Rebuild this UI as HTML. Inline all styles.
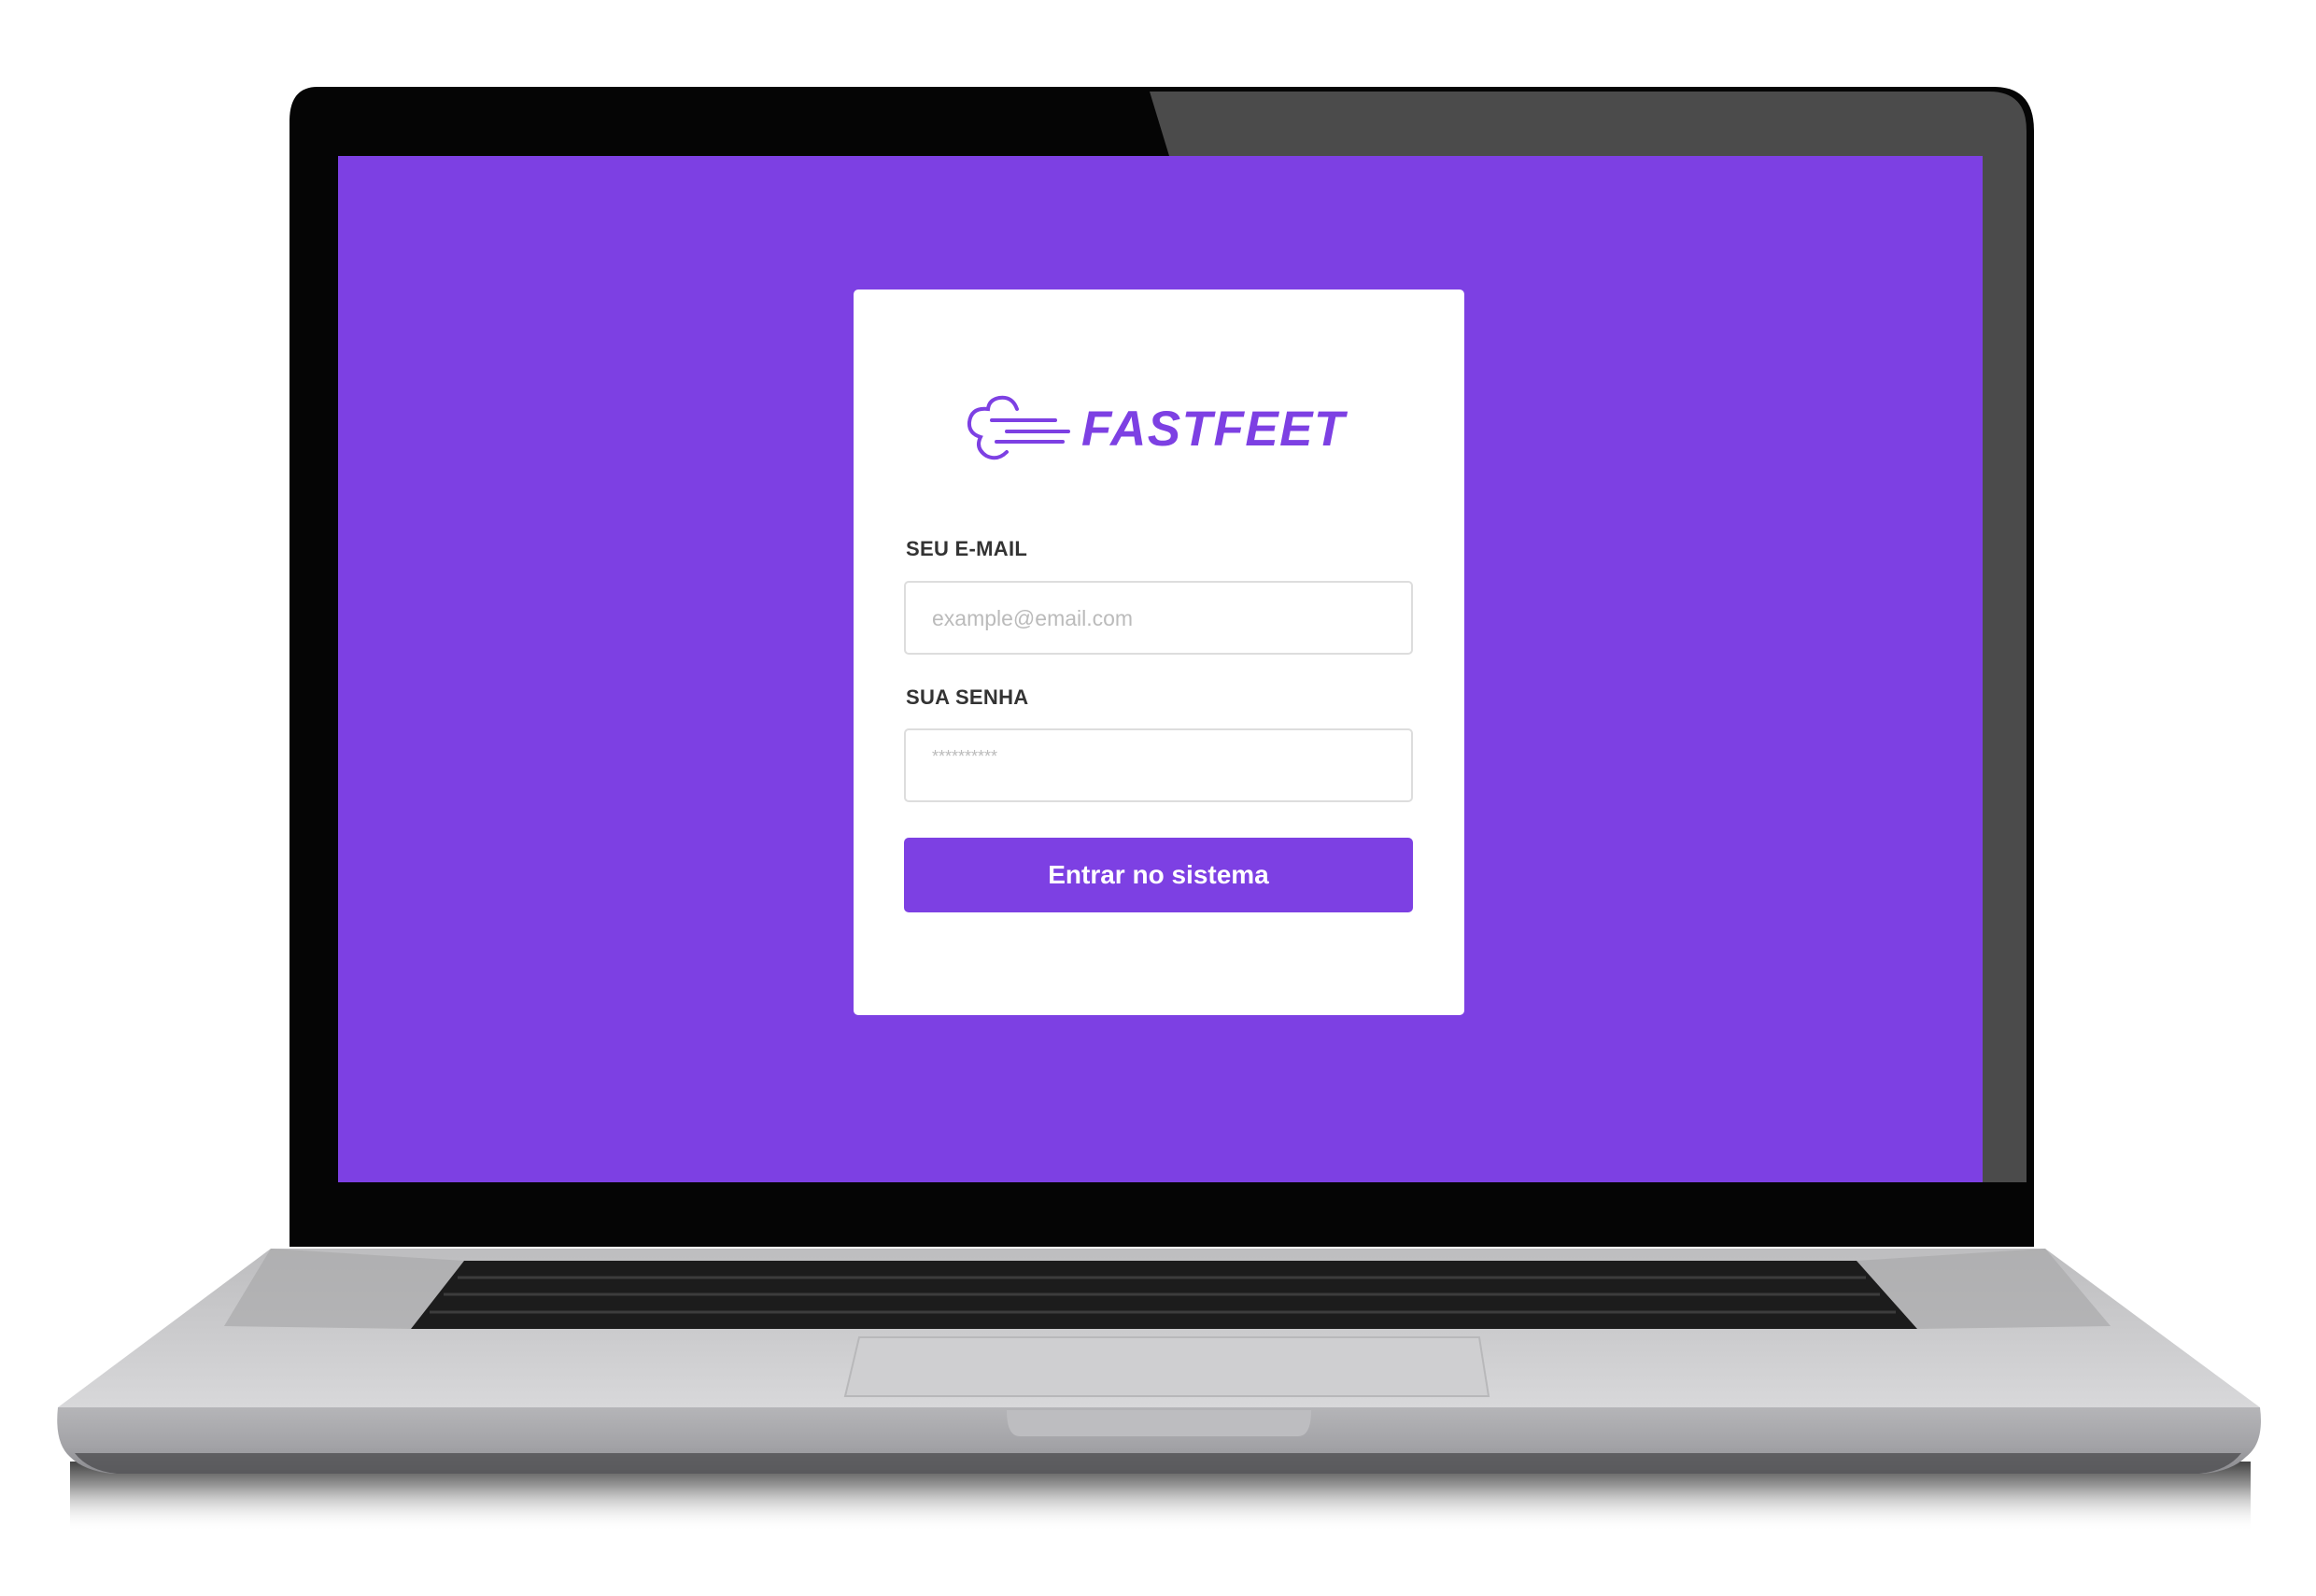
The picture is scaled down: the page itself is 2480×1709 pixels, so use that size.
<!DOCTYPE html>
<html><head><meta charset="utf-8"><style>
html,body{margin:0;padding:0;background:#fff;}
body{width:2480px;height:1709px;position:relative;overflow:hidden;font-family:"Liberation Sans",Arial,sans-serif;}
svg.l{position:absolute;left:0;top:0}
.card{position:absolute;left:914px;top:310px;width:654px;height:777px;background:#fff;border-radius:5px;}
.lbl{position:absolute;left:56px;font-weight:bold;font-size:22px;color:#333;letter-spacing:0.3px}
.inp{position:absolute;left:54px;width:545px;height:79px;border:2px solid #ddd;border-radius:5px;box-sizing:border-box;}
.ph{position:absolute;left:28px;font-size:23px;color:#bbb}
.btn{position:absolute;left:54px;top:587px;width:545px;height:80px;background:#7d40e3;border-radius:5px;color:#fff;font-weight:bold;font-size:28px;text-align:center;line-height:80px}
.logo{position:absolute;left:244px;top:119px;font-weight:bold;font-style:italic;font-size:53px;color:#7d40e3;letter-spacing:1.5px}
</style></head><body>
<svg class="l" width="2480" height="1709" viewBox="0 0 2480 1709">
<defs>
<linearGradient id="deck" x1="0" y1="0" x2="0" y2="1"><stop offset="0" stop-color="#bdbdbf"/><stop offset="1" stop-color="#d8d8da"/></linearGradient>
<linearGradient id="front" x1="0" y1="0" x2="0" y2="1"><stop offset="0" stop-color="#b5b5b8"/><stop offset="0.6" stop-color="#a2a2a6"/><stop offset="1" stop-color="#8a8a8e"/></linearGradient>
<linearGradient id="sh" x1="0" y1="0" x2="0" y2="1"><stop offset="0" stop-color="#444"/><stop offset="0.35" stop-color="#999"/><stop offset="1" stop-color="#fff" stop-opacity="0"/></linearGradient>
</defs>
<path d="M340 93 H2135 Q2178 93 2178 140 V1335 H310 V130 Q310 93 340 93 Z" fill="#050505"/>
<path d="M1231 98 H2130 Q2170 98 2170 140 V1266 H2123 V167 H1252 Z" fill="#4b4b4b"/>
<rect x="362" y="167" width="1761" height="1099" fill="#7d40e3"/>
<rect x="75" y="1565" width="2335" height="75" fill="url(#sh)"/>
<path d="M290 1337 H2190 L2420 1507 H62 Z" fill="url(#deck)"/>
<path d="M290 1337 L497 1350 L440 1423 L240 1420 Z" fill="#a9a9ab" opacity="0.7"/>
<path d="M2190 1337 L1988 1350 L2053 1423 L2260 1420 Z" fill="#a9a9ab" opacity="0.7"/>
<path d="M497 1350 H1988 L2053 1423 H440 Z" fill="#1c1c1c"/>
<g stroke="#3c3c3c" stroke-width="3">
<line x1="490" y1="1368" x2="1998" y2="1368"/><line x1="475" y1="1386" x2="2013" y2="1386"/><line x1="460" y1="1405" x2="2030" y2="1405"/>
</g>
<path d="M920 1432 H1584 L1594 1495 H905 Z" fill="#cfcfd1" stroke="#b8b8ba" stroke-width="2"/>
<path d="M62 1507 H2420 Q2425 1545 2405 1560 Q2390 1575 2360 1578 H120 Q90 1575 75 1560 Q58 1545 62 1507 Z" fill="url(#front)"/>
<path d="M80 1556 H2400 Q2385 1575 2355 1578 H125 Q95 1575 80 1556 Z" fill="#4a4a4c" opacity="0.75"/>
<path d="M1078 1510 H1404 Q1404 1538 1390 1538 H1092 Q1078 1538 1078 1510 Z" fill="#bdbdc0"/>
</svg>
<div class="card">
<svg style="position:absolute;left:118px;top:112px" width="120" height="75" viewBox="0 0 120 75" fill="none" stroke="#7d40e3" stroke-width="4" stroke-linecap="round">
<path d="M57 16 Q52 2 38 4 Q27 6 26 16 Q8 14 6 30 Q5 42 18 46 Q12 58 24 66 Q36 72 46 62"/>
<line x1="30" y1="28" x2="98" y2="28"/>
<line x1="46" y1="40" x2="112" y2="40"/>
<line x1="35" y1="51" x2="106" y2="51"/>
</svg>
<div class="logo">FASTFEET</div>
<div class="lbl" style="top:265px">SEU E-MAIL</div>
<div class="inp" style="top:312px"><div class="ph" style="top:25px">example@email.com</div></div>
<div class="lbl" style="top:424px">SUA SENHA</div>
<div class="inp" style="top:470px"><div class="ph" style="top:18px;font-size:18px">**********</div></div>
<div class="btn">Entrar no sistema</div>
</div>
</body></html>
